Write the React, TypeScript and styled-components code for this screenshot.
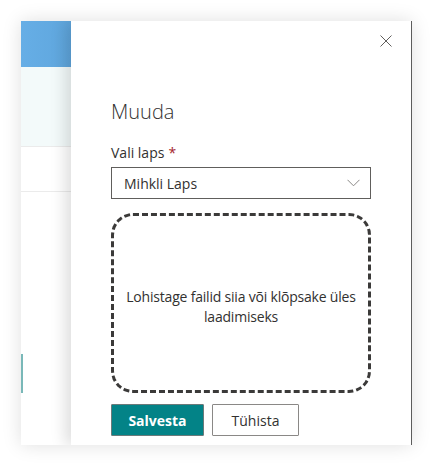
import React from "react";
import styled, { createGlobalStyle } from "styled-components";

const Global = createGlobalStyle`
  html, body { margin: 0; padding: 0; background: #ffffff; }
  body { font-family: "Open Sans", "Noto Sans", sans-serif; color: #323130; }
  * { box-sizing: border-box; }
`;

const Stage = styled.div`
  width: 434px;
  height: 466px;
  padding: 21px 22px 21px 21px;
  overflow: hidden;
`;

const Frame = styled.div`
  width: 391px;
  height: 424px;
  display: flex;
  box-shadow: 0 0 18px rgba(0, 0, 0, 0.13);
  background: #ffffff;
  overflow: hidden;
`;

const BackPage = styled.div`
  width: 50px;
  flex: none;
  display: flex;
  flex-direction: column;
`;

const BackHeader = styled.div`
  height: 46px;
  background: linear-gradient(90deg, #66aee6, #5fa6dd);
`;

const BackBand = styled.div`
  height: 80px;
  background: #f3fafa;
  border-bottom: 1px solid #ebebeb;
`;

const BackRow = styled.div<{ $h: number }>`
  height: ${(p) => p.$h}px;
  background: #ffffff;
  border-bottom: 1px solid #ebebeb;
`;

const BackRest = styled.div`
  flex: 1;
  display: flex;
  flex-direction: column;
  padding-top: 162px;
`;

const SelectionBar = styled.div`
  width: 2px;
  height: 39px;
  background: #79b8b8;
`;

const Panel = styled.div`
  flex: 1;
  background: #ffffff;
  border-right: 1px solid #5c5c5c;
  box-shadow: -6px 0 14px rgba(0, 0, 0, 0.13);
  display: flex;
  flex-direction: column;
  padding: 14px 0 0 40px;
`;

const TopBar = styled.div`
  display: flex;
  justify-content: flex-end;
  padding-right: 19px;
  height: 12px;
`;

const CloseButton = styled.button`
  width: 12px;
  height: 12px;
  padding: 0;
  border: none;
  background: transparent;
  display: flex;
  align-items: center;
  justify-content: center;
  cursor: pointer;
`;

const Title = styled.h1`
  margin: 51px 0 0 0;
  font-size: 20px;
  line-height: 28px;
  font-weight: 300;
  color: #323130;
`;

const Form = styled.div`
  width: 260px;
  display: flex;
  flex-direction: column;
`;

const Label = styled.label`
  margin-top: 17px;
  font-size: 14px;
  line-height: 20px;
  font-weight: 400;
  color: #323130;
  padding-bottom: 4px;
`;

const Required = styled.span`
  color: #a4262c;
  margin-left: 4px;
`;

const Dropdown = styled.div`
  height: 32px;
  border: 1px solid #605e5c;
  display: flex;
  align-items: center;
  justify-content: space-between;
  padding: 0 10px 0 12px;
  font-size: 14px;
  color: #323130;
`;

const DropZone = styled.div`
  margin-top: 14px;
  height: 180px;
  border: 3px dashed #3b3a39;
  border-radius: 22px;
  display: flex;
  align-items: center;
  justify-content: center;
  text-align: center;
  padding: 8px 0 0;
  font-size: 14px;
  line-height: 20px;
  letter-spacing: -0.2px;
  color: #323130;
`;

const Actions = styled.div`
  margin-top: 11px;
  display: flex;
  gap: 8px;
`;

const Button = styled.button<{ $primary?: boolean; $w: number }>`
  width: ${(p) => p.$w}px;
  height: 32px;
  font-family: inherit;
  font-size: 14px;
  font-weight: ${(p) => (p.$primary ? 700 : 400)};
  color: ${(p) => (p.$primary ? "#ffffff" : "#323130")};
  background: ${(p) => (p.$primary ? "#038387" : "#ffffff")};
  border: 1px solid ${(p) => (p.$primary ? "#6b7a7a" : "#8a8886")};
  border-radius: 1px;
  padding: 0;
  cursor: pointer;
`;

export default function App() {
  return (
    <>
      <Global />
      <Stage>
        <Frame>
          <BackPage>
            <BackHeader />
            <BackBand />
            <BackRow $h={45} />
            <BackRest>
              <SelectionBar />
            </BackRest>
          </BackPage>
          <Panel>
            <TopBar>
              <CloseButton aria-label="Sulge">
                <svg width="12" height="12" viewBox="0 0 12 12">
                  <path d="M0.5 0.5 L11.5 11.5 M11.5 0.5 L0.5 11.5" stroke="#605e5c" strokeWidth="1" fill="none" />
                </svg>
              </CloseButton>
            </TopBar>
            <Title>Muuda</Title>
            <Form>
              <Label>
                Vali laps<Required>*</Required>
              </Label>
              <Dropdown>
                <span>Mihkli Laps</span>
                <svg width="13" height="8" viewBox="0 0 13 8">
                  <path d="M0.5 0.8 L6.5 6.8 L12.5 0.8" stroke="#8a8886" strokeWidth="1" fill="none" />
                </svg>
              </Dropdown>
              <DropZone>Lohistage failid siia või klõpsake üles laadimiseks</DropZone>
              <Actions>
                <Button $primary $w={93}>Salvesta</Button>
                <Button $w={87}>Tühista</Button>
              </Actions>
            </Form>
          </Panel>
        </Frame>
      </Stage>
    </>
  );
}
